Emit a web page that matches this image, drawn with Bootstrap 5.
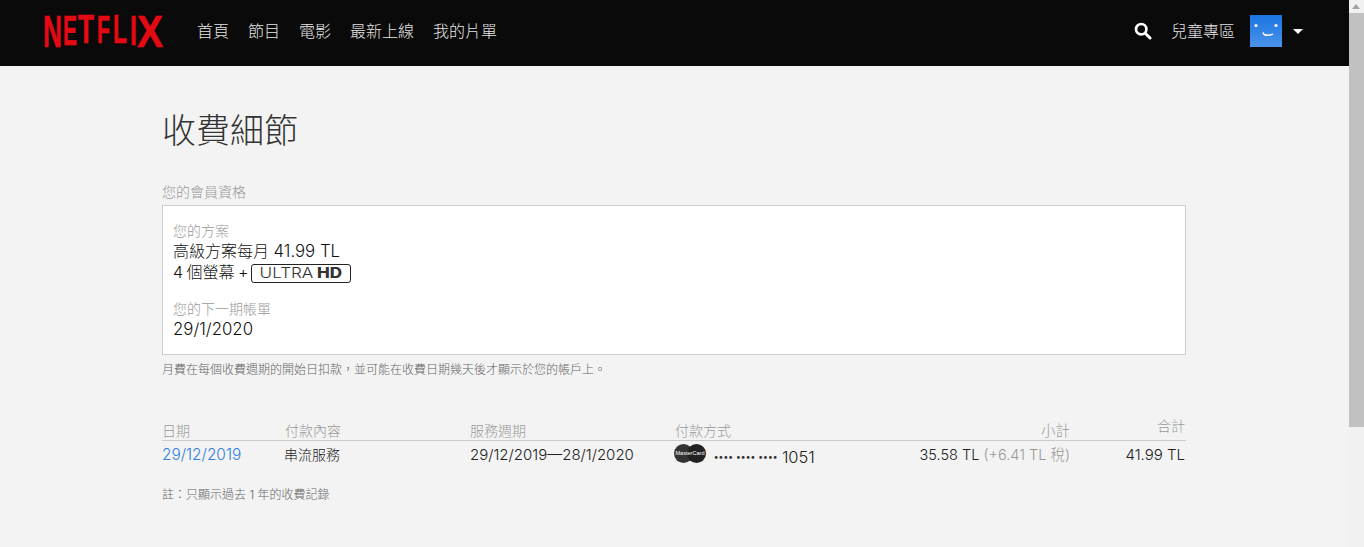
<!DOCTYPE html>
<html lang="zh-Hant">
<head>
<meta charset="utf-8">
<title>收費細節</title>
<link href="https://cdn.jsdelivr.net/npm/bootstrap@5.3.0/dist/css/bootstrap.min.css" rel="stylesheet">
<style>
html,body{height:547px;overflow:hidden;}
body{background:#f3f3f3;color:#333;font-family:Inter,"Noto Sans CJK TC",sans-serif;font-size:15px;line-height:20px;position:relative;font-weight:300;}
.page-wrap{width:1349px;}
.nf-head{height:66px;background:#0a0a0a;padding-left:43px;padding-right:46px;}
.nf-logo{width:121px;height:40px;display:block;margin-right:33px;margin-top:-4px;overflow:visible;}
.nf-logo text{font-family:"Liberation Sans",sans-serif;font-weight:700;fill:#e50914;stroke:#e50914;stroke-width:.5;}
.nf-link{color:#e5e5e5;font-size:16px;line-height:20px;text-decoration:none;margin-right:19px;margin-top:-5px;}
.nf-kids{margin-right:15px;}
.nf-search{margin-right:19px;margin-top:-5px;}
.nf-avatar{width:32px;height:32px;display:block;margin-top:-5px;}
.nf-caret{width:0;height:0;border-style:solid;border-width:5px 5px 0 5px;border-color:#fff transparent transparent;margin-left:11px;margin-top:-3px;}
.nf-main{width:1024px;margin-left:162px;}
.nf-title{font-size:34px;line-height:44px;font-weight:300;color:#333;margin:0;padding-top:43px;}
.nf-label{color:#999;font-size:14px;line-height:18px;}
.nf-section-title{margin-top:30px;padding-bottom:4px;}
.nf-box{background:#fff;border:1px solid #ccc;height:150px;padding:16px 10px;}
.nf-value{font-size:16px;line-height:21px;color:#111;font-weight:300;margin-top:1px;}
.nf-value + .nf-value{margin-top:0;}
.nf-num{font-size:16.8px;}
.nf-plan{word-spacing:-1px;}
.nf-uhd{display:inline-flex;align-items:center;justify-content:center;vertical-align:0;border:1.5px solid #222;border-radius:3px;height:19px;width:100px;margin-left:-1px;overflow:hidden;color:#333;}
.nf-uhd-in{display:inline-block;white-space:nowrap;font-size:14px;line-height:16px;font-weight:300;transform:scaleX(1.22);}
.nf-uhd-in b{font-weight:800;}
.nf-gap{margin-top:17px;}
.nf-note{font-size:12px;line-height:16px;color:#666;margin-top:7px;}
.nf-table{margin-top:40px;}
.nf-thead{border-bottom:1px solid #ccc;height:23px;align-items:flex-end;padding-bottom:0;}
.nf-th{padding-left:1px;}
.nf-row{font-size:15px;line-height:20px;color:#222;padding-top:4px;font-weight:300;}
.c-date{width:122px;}
.c-date a{font-size:15.4px;}
.c-desc{width:186px;font-size:14px;}
.c-period{width:204px;}
.c-pay{width:186px;}
.c-sub{width:210px;text-align:right;font-size:14.5px;}
.c-total{width:116px;text-align:right;padding-right:1px;}
.up5{position:relative;top:-5px;}
.nf-blue{color:#2e7fe0;text-decoration:none;}
.nf-tax{color:#999;}
.nf-card{width:32px;height:19px;display:block;margin-right:8px;margin-top:-1px;}
.nf-card text{font-family:"Liberation Sans",sans-serif;font-size:5px;fill:#fff;}
.nf-dots{font-size:9px;letter-spacing:.6px;color:#333;margin-right:4px;margin-top:2px;font-weight:700;}
.nf-last{margin-top:2px;font-size:16.5px;font-weight:300;}
.nf-foot{font-size:12px;line-height:16px;color:#666;margin-top:20px;}
.nf-scroll{position:absolute;top:0;right:0;width:15px;height:547px;background:#f1f1f1;}
.nf-thumb{position:absolute;top:13px;left:0;width:15px;height:414px;background:#c1c1c1;}
.nf-arrow{position:absolute;top:4px;left:3px;width:0;height:0;border-style:solid;border-width:0 4.5px 5px 4.5px;border-color:transparent transparent #a3a3a3;}
</style>
</head>
<body>
<div class="page-wrap">
  <header class="nf-head d-flex align-items-center">
    <svg class="nf-logo" viewBox="0 0 121 40" role="img" aria-label="Netflix"><text><tspan x="0" y="36" font-size="45" textLength="19" lengthAdjust="spacingAndGlyphs">N</tspan><tspan x="20" y="33.5" font-size="42" textLength="14" lengthAdjust="spacingAndGlyphs">E</tspan><tspan x="35" y="32" font-size="40" textLength="16" lengthAdjust="spacingAndGlyphs">T</tspan><tspan x="54" y="31.5" font-size="39" textLength="13" lengthAdjust="spacingAndGlyphs">F</tspan><tspan x="70" y="32" font-size="40" textLength="14" lengthAdjust="spacingAndGlyphs">L</tspan><tspan x="87" y="33.5" font-size="42" textLength="7" lengthAdjust="spacingAndGlyphs">I</tspan><tspan x="94" y="36" font-size="45" textLength="26" lengthAdjust="spacingAndGlyphs">X</tspan></text></svg>
    <nav class="d-flex align-items-center">
      <a class="nf-link" href="#">首頁</a>
      <a class="nf-link" href="#">節目</a>
      <a class="nf-link" href="#">電影</a>
      <a class="nf-link" href="#">最新上線</a>
      <a class="nf-link" href="#">我的片單</a>
    </nav>
    <div class="d-flex align-items-center ms-auto">
      <svg class="nf-search" width="18" height="18" viewBox="0 0 18 18"><circle cx="7.2" cy="7.2" r="5.2" fill="none" stroke="#fff" stroke-width="2.6"/><path d="M11 11l5 5" stroke="#fff" stroke-width="3" stroke-linecap="round"/></svg>
      <a class="nf-link nf-kids" href="#">兒童專區</a>
      <svg class="nf-avatar" viewBox="0 0 32 32"><defs><linearGradient id="av" x1="0" y1="0" x2="0" y2="1"><stop offset="0" stop-color="#1a74e0"/><stop offset="1" stop-color="#4a93ec"/></linearGradient></defs><rect width="32" height="32" fill="url(#av)"/><circle cx="6" cy="10.5" r="1.6" fill="#fff"/><circle cx="26" cy="10.5" r="1.6" fill="#fff"/><path d="M13 17.5c.5 2.5 2.5 2.8 4.5 2.8s4-.3 5.5-1.3" fill="none" stroke="#fff" stroke-width="1.4"/></svg>
      <span class="nf-caret"></span>
    </div>
  </header>
  <main class="nf-main">
    <h1 class="nf-title">收費細節</h1>
    <div class="nf-label nf-section-title">您的會員資格</div>
    <section class="nf-box">
      <div class="nf-label">您的方案</div>
      <div class="nf-value">高級方案每月 <span class="nf-num">41.99 TL</span></div>
      <div class="nf-value nf-plan">4 個螢幕 + <span class="nf-uhd"><span class="nf-uhd-in">ULTRA&nbsp;<b>HD</b></span></span></div>
      <div class="nf-label nf-gap">您的下一期帳單</div>
      <div class="nf-value"><span class="nf-num">29/1/2020</span></div>
    </section>
    <div class="nf-note">月費在每個收費週期的開始日扣款，並可能在收費日期幾天後才顯示於您的帳戶上。</div>
    <section class="nf-table">
      <div class="nf-thead d-flex nf-label">
        <div class="c-date">日期</div>
        <div class="c-desc nf-th">付款內容</div>
        <div class="c-period">服務週期</div>
        <div class="c-pay nf-th">付款方式</div>
        <div class="c-sub">小計</div>
        <div class="c-total up5">合計</div>
      </div>
      <div class="nf-row d-flex">
        <div class="c-date"><a class="nf-blue" href="#">29/12/2019</a></div>
        <div class="c-desc">串流服務</div>
        <div class="c-period">29/12/2019—28/1/2020</div>
        <div class="c-pay d-flex align-items-start">
          <svg class="nf-card" viewBox="0 0 32 19"><circle cx="9.5" cy="9.5" r="9.5" fill="#333"/><circle cx="22.5" cy="9.5" r="9.5" fill="#222"/><text x="16" y="11" text-anchor="middle" textLength="29" lengthAdjust="spacingAndGlyphs">MasterCard</text></svg>
          <span class="nf-dots">•••• •••• ••••</span><span class="nf-last">1051</span>
        </div>
        <div class="c-sub">35.58 TL <span class="nf-tax">(+6.41 TL 稅)</span></div>
        <div class="c-total">41.99 TL</div>
      </div>
    </section>
    <div class="nf-foot">註：只顯示過去 1 年的收費記錄</div>
  </main>
</div>
<div class="nf-scroll"><span class="nf-arrow"></span><div class="nf-thumb"></div></div>
<script src="https://cdn.jsdelivr.net/npm/bootstrap@5.3.0/dist/js/bootstrap.bundle.min.js"></script>
</body>
</html>
